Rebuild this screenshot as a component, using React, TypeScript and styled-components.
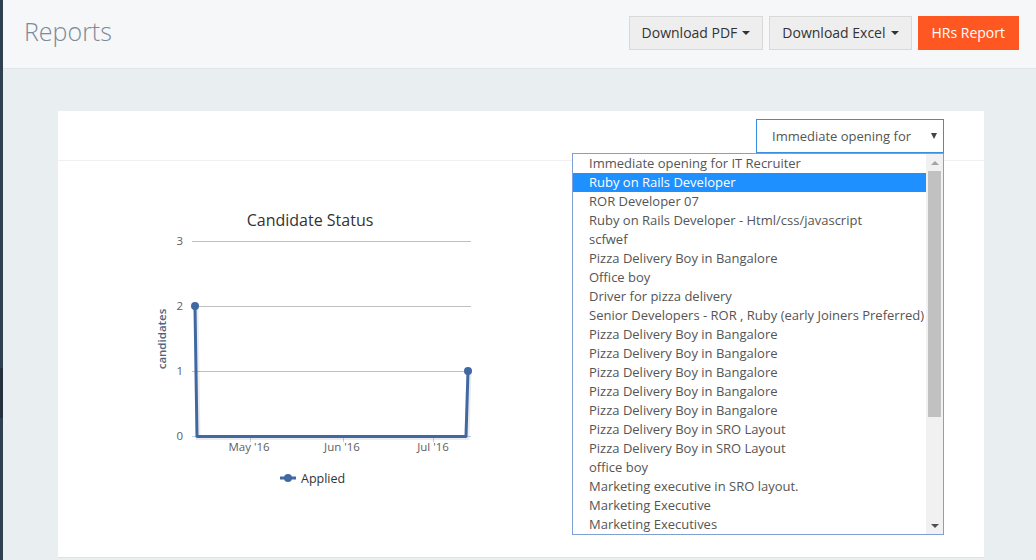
import React from "react";
import styled, { createGlobalStyle } from "styled-components";

const GlobalStyle = createGlobalStyle`
  html, body { margin: 0; padding: 0; }
  body {
    font-family: "Open Sans", "Noto Sans", sans-serif;
    background: #e9eef1;
    width: 1036px;
    height: 560px;
    overflow: hidden;
  }
  * { box-sizing: border-box; }
`;

const Shell = styled.div`
  display: flex;
  width: 1036px;
  height: 560px;
`;

const SideEdge = styled.div`
  width: 3px;
  flex: none;
  background: #2f4050;
  display: flex;
  flex-direction: column;
`;

const SideMark = styled.div<{ $h: number; $dark?: boolean }>`
  height: ${(p) => p.$h}px;
  background: ${(p) => (p.$dark ? "#24313d" : "transparent")};
  flex: none;
`;

const Main = styled.div`
  flex: 1;
  display: flex;
  flex-direction: column;
  min-width: 0;
`;

const Header = styled.header`
  height: 69px;
  flex: none;
  background: #f6f7f9;
  border-bottom: 1px solid #e1e5e8;
  display: flex;
  align-items: center;
  justify-content: space-between;
  padding: 0 17px 1px 21px;
`;

const Title = styled.h1`
  margin: 0;
  font-size: 25px;
  font-weight: 300;
  color: #7d8a98;
  letter-spacing: 0;
  line-height: 1;
  margin-top: -5px;
`;

const Actions = styled.div`
  display: flex;
  gap: 6px;
  align-items: center;
  margin-top: -2px;
`;

const Button = styled.button<{ $primary?: boolean }>`
  height: 34px;
  padding: 0 ${(p) => (p.$primary ? "13px" : "12px")};
  font-family: inherit;
  font-size: 14px;
  color: ${(p) => (p.$primary ? "#ffffff" : "#333333")};
  background: ${(p) => (p.$primary ? "#ff5722" : "#eeeeee")};
  border: 1px solid ${(p) => (p.$primary ? "#ff5722" : "#d9d9d9")};
  border-radius: 0;
  display: inline-flex;
  align-items: center;
  gap: 5px;
  cursor: pointer;
`;

const Caret = styled.span`
  display: inline-block;
  width: 0;
  height: 0;
  border-left: 4px solid transparent;
  border-right: 4px solid transparent;
  border-top: 4px solid #333;
  margin-top: 1px;
`;

const Content = styled.main`
  flex: 1;
  padding: 42px 52px 0 55px;
`;

const Card = styled.section`
  background: #ffffff;
  border-bottom: 1px solid #dfe3e6;
`;

const CardHeader = styled.div`
  height: 50px;
  border-bottom: 1px solid #eef0f2;
  display: flex;
  justify-content: flex-end;
  align-items: flex-start;
  padding: 8px 40px 0 0;
`;

const SelectWrap = styled.div`
  position: relative;
  width: 188px;
`;

const SelectBox = styled.div`
  height: 34px;
  border: 1px solid #3a8ee0;
  display: flex;
  align-items: center;
  justify-content: space-between;
  padding: 0 6px 0 15px;
  font-size: 13px;
  color: #555555;
  background: #fff;
`;

const SelectArrow = styled.span`
  width: 0;
  height: 0;
  border-left: 3.5px solid transparent;
  border-right: 3.5px solid transparent;
  border-top: 6px solid #444;
`;

const DropList = styled.div`
  position: absolute;
  top: 100%;
  right: 0;
  width: 372px;
  height: 382px;
  border: 1px solid #7ea0d6;
  background: #ffffff;
  display: flex;
  z-index: 5;
`;

const Options = styled.ul`
  list-style: none;
  margin: 0;
  padding: 0;
  flex: 1;
  overflow: hidden;
`;

const Option = styled.li<{ $selected?: boolean }>`
  height: 19px;
  line-height: 19px;
  padding-left: 16px;
  font-size: 13px;
  white-space: nowrap;
  color: ${(p) => (p.$selected ? "#ffffff" : "#555555")};
  background: ${(p) => (p.$selected ? "#1e90ff" : "transparent")};
`;

const ScrollTrack = styled.div`
  width: 17px;
  flex: none;
  background: #f1f1f1;
  display: flex;
  flex-direction: column;
  align-items: center;
`;

const ScrollBtn = styled.div<{ $down?: boolean }>`
  height: 17px;
  width: 17px;
  flex: none;
  display: flex;
  align-items: center;
  justify-content: center;
  &::after {
    content: "";
    width: 0;
    height: 0;
    border-left: 4px solid transparent;
    border-right: 4px solid transparent;
    ${(p) =>
      p.$down
        ? "border-top: 4px solid #505050;"
        : "border-bottom: 4px solid #a3a3a3;"}
  }
`;

const ScrollThumb = styled.div`
  width: 13px;
  height: 246px;
  background: #c1c1c1;
  flex: none;
`;

const ScrollSpacer = styled.div`
  flex: 1;
`;

const CardBody = styled.div`
  height: 396px;
  padding: 29px 0 0 82px;
`;

const ChartSvg = styled.svg`
  display: block;
  font-family: "Open Sans", "Noto Sans", sans-serif;
`;

const options = [
  "Immediate opening for IT Recruiter",
  "Ruby on Rails Developer",
  "ROR Developer 07",
  "Ruby on Rails Developer - Html/css/javascript",
  "scfwef",
  "Pizza Delivery Boy in Bangalore",
  "Office boy",
  "Driver for pizza delivery",
  "Senior Developers - ROR , Ruby (early Joiners Preferred)",
  "Pizza Delivery Boy in Bangalore",
  "Pizza Delivery Boy in Bangalore",
  "Pizza Delivery Boy in Bangalore",
  "Pizza Delivery Boy in Bangalore",
  "Pizza Delivery Boy in Bangalore",
  "Pizza Delivery Boy in SRO Layout",
  "Pizza Delivery Boy in SRO Layout",
  "office boy",
  "Marketing executive in SRO layout.",
  "Marketing Executive",
  "Marketing Executives",
];

function Chart() {
  const grid = [
    { v: "3", y: 51 },
    { v: "2", y: 116 },
    { v: "1", y: 181 },
  ];
  const line = "M55 116 L57 246.5 L326 246.5 L328 181";
  return (
    <ChartSvg width="360" height="310" viewBox="0 0 360 310">
      <text x="170" y="36" textAnchor="middle" fontSize="16" fill="#333333">
        Candidate Status
      </text>
      {grid.map((g) => (
        <g key={g.v}>
          <line x1="52" x2="331" y1={g.y + 0.5} y2={g.y + 0.5} stroke="#c0c0c0" strokeWidth="1" />
          <text x="43" y={g.y + 4} textAnchor="end" fontSize="11.5" fill="#606060">
            {g.v}
          </text>
        </g>
      ))}
      <text x="43" y="250" textAnchor="end" fontSize="11.5" fill="#606060">
        0
      </text>
      <line x1="52" x2="331" y1="246.5" y2="246.5" stroke="#c0d0e0" strokeWidth="1" />
      {[110, 203, 293].map((x) => (
        <line key={x} x1={x + 0.5} x2={x + 0.5} y1="247" y2="252" stroke="#c0d0e0" strokeWidth="1" />
      ))}
      <text
        transform="translate(26 149) rotate(-90)"
        textAnchor="middle"
        fontSize="11.5"
        fontWeight="600"
        fill="#4d6380"
      >
        candidates
      </text>
      <path d={line} fill="none" stroke="rgba(0,0,0,0.08)" strokeWidth="5" transform="translate(1 1)" />
      <path d={line} fill="none" stroke="#4069a3" strokeWidth="3" strokeLinejoin="round" />
      <circle cx="55" cy="116" r="4" fill="#4069a3" />
      <circle cx="328" cy="181" r="4" fill="#4069a3" />
      <text x="109" y="261" textAnchor="middle" fontSize="11.5" fill="#606060">
        May '16
      </text>
      <text x="202" y="261" textAnchor="middle" fontSize="11.5" fill="#606060">
        Jun '16
      </text>
      <text x="293" y="261" textAnchor="middle" fontSize="11.5" fill="#606060">
        Jul '16
      </text>
      <line x1="140" x2="156" y1="288" y2="288" stroke="#4069a3" strokeWidth="3" />
      <circle cx="148" cy="288" r="4" fill="#4069a3" />
      <text x="161" y="293" fontSize="12.5" fill="#333333">
        Applied
      </text>
    </ChartSvg>
  );
}

export default function App() {
  return (
    <>
      <GlobalStyle />
      <Shell>
        <SideEdge>
          <SideMark $h={368} />
          <SideMark $h={50} $dark />
        </SideEdge>
        <Main>
          <Header>
            <Title>Reports</Title>
            <Actions>
              <Button>
                Download PDF <Caret />
              </Button>
              <Button>
                Download Excel <Caret />
              </Button>
              <Button $primary>HRs Report</Button>
            </Actions>
          </Header>
          <Content>
            <Card>
              <CardHeader>
                <SelectWrap>
                  <SelectBox>
                    <span>Immediate opening for</span>
                    <SelectArrow />
                  </SelectBox>
                  <DropList>
                    <Options>
                      {options.map((o, i) => (
                        <Option key={i} $selected={i === 1}>
                          {o}
                        </Option>
                      ))}
                    </Options>
                    <ScrollTrack>
                      <ScrollBtn />
                      <ScrollThumb />
                      <ScrollSpacer />
                      <ScrollBtn $down />
                    </ScrollTrack>
                  </DropList>
                </SelectWrap>
              </CardHeader>
              <CardBody>
                <Chart />
              </CardBody>
            </Card>
          </Content>
        </Main>
      </Shell>
    </>
  );
}
